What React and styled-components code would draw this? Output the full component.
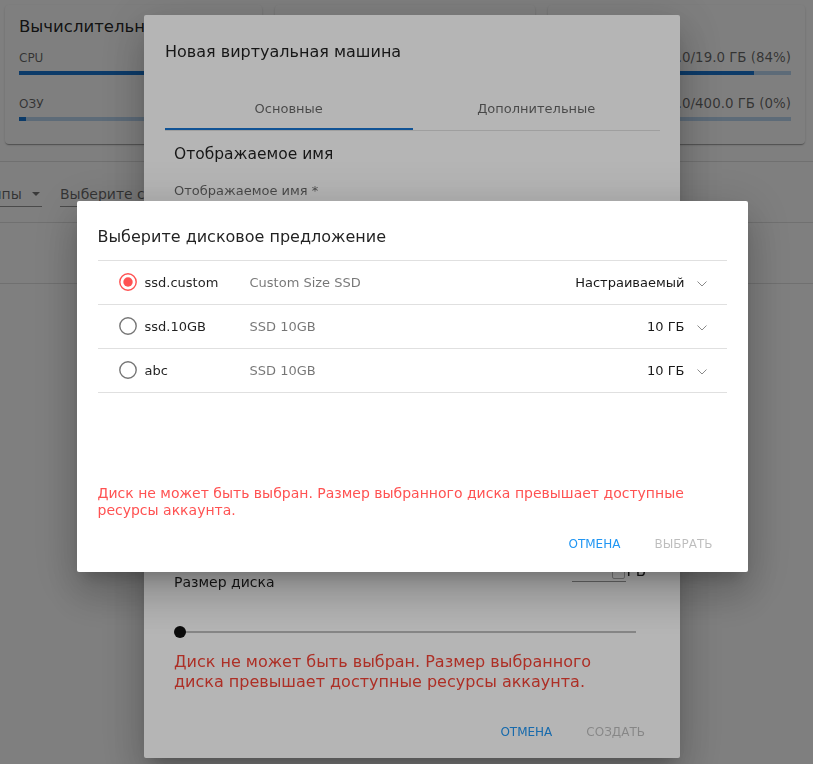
import React from 'react';
import styled, { createGlobalStyle } from 'styled-components';

const GlobalStyle = createGlobalStyle`
  html, body { margin: 0; padding: 0; }
  body {
    font-family: "DejaVu Sans", "Noto Sans", sans-serif;
    background: #fff;
    color: rgba(0, 0, 0, 0.87);
    overflow: hidden;
  }
  * { box-sizing: border-box; }
`;

const Page = styled.div`
  width: 813px;
  height: 764px;
  overflow: hidden;
`;

const Cards = styled.div`
  display: grid;
  grid-template-columns: 257px 260px 257px;
  column-gap: 13px;
  padding: 5px 0 0 5px;
`;

const Card = styled.div`
  height: 139px;
  padding: 12px 14px 0;
  background: #fff;
  border-radius: 4px;
  box-shadow: 0 2px 1px -1px rgba(0, 0, 0, 0.2), 0 1px 1px 0 rgba(0, 0, 0, 0.14),
    0 1px 3px 0 rgba(0, 0, 0, 0.12);
`;

const CardTitle = styled.div`
  font-size: 16.5px;
  line-height: 20px;
  white-space: nowrap;
  overflow: hidden;
`;

const MetricRow = styled.div`
  display: flex;
  justify-content: space-between;
  align-items: baseline;
  margin-top: ${p => (p.$first ? 13 : 21)}px;
  line-height: 16px;
  color: rgba(0, 0, 0, 0.6);
`;

const MetricLabel = styled.span`
  font-size: 12px;
`;

const MetricValue = styled.span`
  font-size: 13.4px;
`;

const Track = styled.div`
  height: 4px;
  margin-top: 5px;
  background: rgba(25, 118, 210, 0.3);
`;

const Fill = styled.div`
  height: 100%;
  background: #1976d2;
`;

const Toolbar = styled.div`
  display: flex;
  align-items: flex-end;
  gap: 18px;
  height: 62px;
  margin-top: 17px;
  padding-bottom: 15px;
  border-top: 1px solid rgba(0, 0, 0, 0.12);
  border-bottom: 1px solid rgba(0, 0, 0, 0.12);
`;

const Select = styled.div`
  display: flex;
  align-items: center;
  justify-content: space-between;
  flex-shrink: 0;
  gap: 10px;
  width: ${p => p.$w}px;
  margin-left: ${p => p.$shift || 0}px;
  height: 25px;
  padding-bottom: 1px;
  border-bottom: 1px solid rgba(0, 0, 0, 0.42);
  font-size: 14px;
  color: rgba(0, 0, 0, 0.6);
  white-space: nowrap;

  svg { margin-right: 3px; flex-shrink: 0; }
`;

const TableHead = styled.div`
  height: 61px;
  border-bottom: 1px solid rgba(0, 0, 0, 0.12);
`;

const Scrim = styled.div`
  position: fixed;
  inset: 0;
  display: flex;
  align-items: center;
  justify-content: center;
  padding: 8px 0 0 11px;
  background: rgba(0, 0, 0, ${p => p.$alpha});
`;

const Dialog = styled.div`
  width: ${p => p.$w}px;
  background: #fff;
  border-radius: 2px;
  box-shadow: 0 11px 15px -7px rgba(0, 0, 0, 0.2), 0 24px 38px 3px rgba(0, 0, 0, 0.14),
    0 9px 46px 8px rgba(0, 0, 0, 0.12);
`;

const DialogTitle = styled.div`
  padding: ${p => p.$top}px 21px 0;
  font-size: 16px;
  line-height: 22px;
`;

const TabBar = styled.div`
  display: flex;
  margin: 21px 20px 0 21px;
  border-bottom: 1px solid rgba(0, 0, 0, 0.12);
`;

const Tab = styled.div`
  flex: 1;
  height: 46px;
  padding-top: 4px;
  display: flex;
  align-items: center;
  justify-content: center;
  font-size: 13px;
  color: rgba(0, 0, 0, 0.6);
  box-shadow: ${p => (p.$active ? 'inset 0 -2px 0 #1976d2' : 'none')};
`;

const FormBody = styled.div`
  padding: 0 34px 0 30px;
`;

const FieldTitle = styled.div`
  margin-top: 13px;
  font-size: 15.5px;
  line-height: 20px;
`;

const FieldLabel = styled.div`
  margin-top: 17px;
  font-size: 13px;
  line-height: 20px;
  color: rgba(0, 0, 0, 0.6);
`;

const NameInput = styled.div`
  height: 28px;
  margin-bottom: 343px;
  border-bottom: 1px solid rgba(0, 0, 0, 0.42);
`;

const SizeRow = styled.div`
  display: flex;
  justify-content: space-between;
  align-items: flex-start;
  font-size: 14px;
  line-height: 20px;
`;

const SizeField = styled.div`
  display: flex;
  align-items: flex-start;
  gap: 1px;
  margin-top: -11px;
  font-size: 15px;
`;

const SizeInput = styled.div`
  width: 54px;
  height: 21px;
  display: flex;
  justify-content: flex-end;
  align-items: flex-end;
  padding: 0 1px 2px 0;
  border-bottom: 1px solid rgba(0, 0, 0, 0.42);
`;

const Spinner = styled.div`
  width: 13px;
  height: 14px;
  border: 1px solid rgba(0, 0, 0, 0.3);
  border-radius: 2px;
`;

const Slider = styled.div`
  position: relative;
  height: 12px;
  margin: 34px 10px 0 6px;
  display: flex;
  align-items: center;
`;

const SliderTrack = styled.div`
  flex: 1;
  height: 2px;
  background: rgba(0, 0, 0, 0.26);
`;

const SliderThumb = styled.div`
  position: absolute;
  left: -6px;
  top: 0;
  width: 12px;
  height: 12px;
  border-radius: 50%;
  background: #111;
`;

const ErrorText = styled.div`
  margin-top: ${p => p.$top}px;
  padding: ${p => p.$pad};
  font-size: ${p => p.$size}px;
  line-height: ${p => p.$lh}px;
  color: ${p => p.$color};
`;

const Actions = styled.div`
  display: flex;
  justify-content: flex-end;
  gap: 18px;
  margin-top: ${p => p.$top}px;
  padding: 0 27px ${p => p.$bottom}px 0;
`;

const Button = styled.div`
  height: 36px;
  padding: 0 8px;
  display: flex;
  align-items: center;
  font-size: 12px;
  text-transform: uppercase;
  color: ${p => (p.$disabled ? 'rgba(0, 0, 0, 0.26)' : '#2196f3')};
`;

const OfferList = styled.div`
  margin: 12px 21px 0;
  border-top: 1px solid rgba(0, 0, 0, 0.12);
`;

const OfferRow = styled.div`
  display: flex;
  align-items: center;
  height: 44px;
  padding: 0 20px 0 21px;
  border-bottom: 1px solid rgba(0, 0, 0, 0.12);
  font-size: 13px;
`;

const OfferName = styled.div`
  width: 105px;
  margin-left: 8px;
  color: rgba(0, 0, 0, 0.87);
`;

const OfferDesc = styled.div`
  flex: 1;
  color: rgba(0, 0, 0, 0.54);
`;

const OfferSize = styled.div`
  color: rgba(0, 0, 0, 0.9);
`;

const Chevron = styled.svg`
  margin: 4px 0 0 12px;
`;

const Radio = ({ checked }) => (
  <svg width="18" height="18" viewBox="0 0 18 18">
    <circle
      cx="9"
      cy="9"
      r="8.2"
      fill="none"
      stroke={checked ? '#ff5252' : 'rgba(0,0,0,0.54)'}
      strokeWidth="1.4"
    />
    {checked && <circle cx="9" cy="9" r="4.7" fill="#ff5252" />}
  </svg>
);

const Arrow = () => (
  <svg width="8" height="4" viewBox="0 0 8 4">
    <path d="M0 0 L8 0 L4 4 Z" fill="rgba(0,0,0,0.54)" />
  </svg>
);

const cards = [
  {
    title: 'Вычислительные ресурсы',
    metrics: [
      { label: 'CPU', value: '6/8 (75%)', pct: 75 },
      { label: 'ОЗУ', value: '1/32 ГБ (3%)', pct: 3 }
    ]
  },
  {
    title: 'Сеть',
    metrics: [
      { label: 'Публичные IP', value: '1/2 (50%)', pct: 50 },
      { label: 'Сети', value: '1/5 (20%)', pct: 20 }
    ]
  },
  {
    title: 'Хранилище',
    metrics: [
      { label: 'Диски', value: '16.0/19.0 ГБ (84%)', pct: 84 },
      { label: 'Снимки', value: '0.0/400.0 ГБ (0%)', pct: 0 }
    ]
  }
];

const offers = [
  { name: 'ssd.custom', desc: 'Custom Size SSD', size: 'Настраиваемый', checked: true },
  { name: 'ssd.10GB', desc: 'SSD 10GB', size: '10 ГБ' },
  { name: 'abc', desc: 'SSD 10GB', size: '10 ГБ' }
];

const App = () => (
  <Page>
    <GlobalStyle />
    <Cards>
      {cards.map(card => (
        <Card key={card.title}>
          <CardTitle>{card.title}</CardTitle>
          {card.metrics.map((m, i) => (
            <React.Fragment key={m.label}>
              <MetricRow $first={i === 0}>
                <MetricLabel>{m.label}</MetricLabel>
                <MetricValue>{m.value}</MetricValue>
              </MetricRow>
              <Track>
                <Fill style={{ width: `${m.pct}%` }} />
              </Track>
            </React.Fragment>
          ))}
        </Card>
      ))}
    </Cards>
    <Toolbar>
      <Select $w={88} $shift={-46}>
        <span>Все типы</span>
        <Arrow />
      </Select>
      <Select $w={200}>
        <span>Выберите статус</span>
        <Arrow />
      </Select>
    </Toolbar>
    <TableHead />

    <Scrim $alpha={0.3}>
      <Dialog $w={536}>
        <DialogTitle $top={26}>Новая виртуальная машина</DialogTitle>
        <TabBar>
          <Tab $active>Основные</Tab>
          <Tab>Дополнительные</Tab>
        </TabBar>
        <FormBody>
          <FieldTitle>Отображаемое имя</FieldTitle>
          <FieldLabel>Отображаемое имя *</FieldLabel>
          <NameInput />
          <SizeRow>
            <span>Размер диска</span>
            <SizeField>
              <SizeInput>
                <Spinner />
              </SizeInput>
              <span>ГБ</span>
            </SizeField>
          </SizeRow>
          <Slider>
            <SliderTrack />
            <SliderThumb />
          </Slider>
          <ErrorText $top={14} $pad="0 12px 0 0" $size={16} $lh={20} $color="#f44336">
            Диск не может быть выбран. Размер выбранного диска превышает доступные ресурсы аккаунта.
          </ErrorText>
        </FormBody>
        <Actions $top={22} $bottom={8}>
          <Button>Отмена</Button>
          <Button $disabled>Создать</Button>
        </Actions>
      </Dialog>
    </Scrim>

    <Scrim $alpha={0.29}>
      <Dialog $w={671}>
        <DialogTitle $top={25}>Выберите дисковое предложение</DialogTitle>
        <OfferList>
          {offers.map(o => (
            <OfferRow key={o.name}>
              <Radio checked={o.checked} />
              <OfferName>{o.name}</OfferName>
              <OfferDesc>{o.desc}</OfferDesc>
              <OfferSize>{o.size}</OfferSize>
              <Chevron width="10" height="6" viewBox="0 0 10 6">
                <path d="M0.5 0.5 L5 5 L9.5 0.5" fill="none" stroke="#8a8a8a" strokeWidth="1" />
              </Chevron>
            </OfferRow>
          ))}
        </OfferList>
        <ErrorText $top={92} $pad="0 21px" $size={14} $lh={17} $color="#ff5252">
          Диск не может быть выбран. Размер выбранного диска превышает доступные ресурсы аккаунта.
        </ErrorText>
        <Actions $top={7} $bottom={10}>
          <Button>Отмена</Button>
          <Button $disabled>Выбрать</Button>
        </Actions>
      </Dialog>
    </Scrim>
  </Page>
);

export default App;
